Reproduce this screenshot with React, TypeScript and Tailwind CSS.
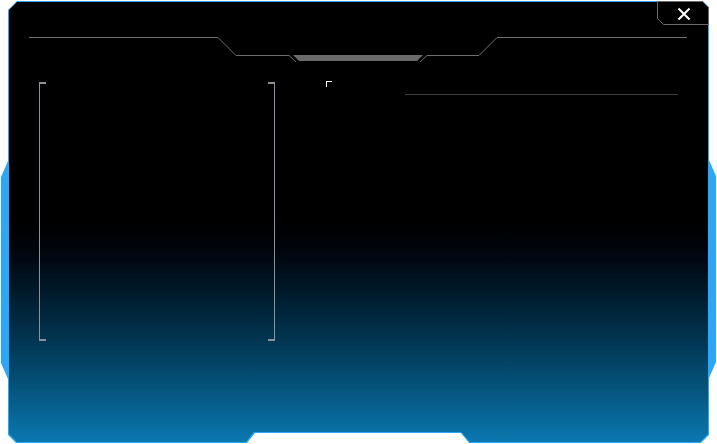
import React from 'react';

// header ornament: thin rails with a notch and a filled bar in the middle
function HeaderRail() {
  return (
    <svg width="661" height="27" viewBox="0 0 661 27" className="block">
      <polyline
        points="1,1.5 190,1.5 208,19.5 261,19.5 268,26"
        fill="none"
        stroke="#6e6e6e"
        strokeWidth="1"
      />
      <polygon points="265,19 395,19 389,25 271,25" fill="#6a6a6a" />
      <polyline
        points="392,26 399,19.5 451,19.5 469,1.5 659,1.5"
        fill="none"
        stroke="#6e6e6e"
        strokeWidth="1"
      />
    </svg>
  );
}

function CloseTab() {
  return (
    <button className="absolute top-0 left-[649px] w-[52px] h-[24px]">
      <svg width="52" height="24" viewBox="0 0 52 24" className="block">
        <path
          d="M0.5 0.5 H45.5 L51.5 6.5 V23.5 H6.5 L0.5 17.5 Z"
          fill="#000"
          stroke="#6a6a6a"
          strokeWidth="1"
        />
        <path
          d="M21.5 7.5 L32.5 18.5 M32.5 7.5 L21.5 18.5"
          stroke="#fff"
          strokeWidth="2"
        />
      </svg>
    </button>
  );
}

export default function App() {
  return (
    <div className="w-[717px] h-[444px] bg-white flex items-start pt-px pl-px overflow-hidden">
      {/* left side grip */}
      <div className="w-[7px] h-[218px] mt-[160px] bg-[#29a8fb] [clip-path:polygon(7px_0,7px_218px,0_202px,0_16px)]" />

      {/* window frame */}
      <div className="relative w-[701px] h-[442px] p-px bg-[#29a8fb] [clip-path:polygon(9px_0,695px_0,701px_6px,701px_434px,693px_442px,461px_442px,453px_432px,247px_432px,239px_442px,8px_442px,0_434px,0_9px)]">
        <div className="h-full flex flex-col bg-linear-to-b from-black from-45% to-[#0b78b0] [clip-path:polygon(8px_0,693px_0,699px_6px,699px_432px,691px_440px,461px_440px,452px_430px,245px_430px,237px_440px,8px_440px,0_432px,0_8px)]">
          <div className="mt-[34px] ml-[19px]">
            <HeaderRail />
          </div>

          <div className="flex items-start mt-[19px] pl-[30px]">
            {/* bracketed list panel */}
            <div className="w-[236px] h-[259px] flex justify-between">
              <div className="w-[7px] h-full border-l border-y-2 border-[#8a9198]" />
              <div className="w-[7px] h-full border-r border-y-2 border-[#8a9198]" />
            </div>

            {/* detail column */}
            <div className="flex items-start ml-[51px] -mt-px">
              <div className="w-[6px] h-[6px] border-l border-t border-white" />
              <div className="ml-[73px] mt-[13px] w-[273px] h-px bg-[#3d3d3d]" />
            </div>
          </div>
        </div>

        <CloseTab />
      </div>

      {/* right side grip */}
      <div className="w-[7px] h-[218px] mt-[159px] bg-[#29a8fb] [clip-path:polygon(0_0,7px_16px,7px_202px,0_218px)]" />
    </div>
  );
}
